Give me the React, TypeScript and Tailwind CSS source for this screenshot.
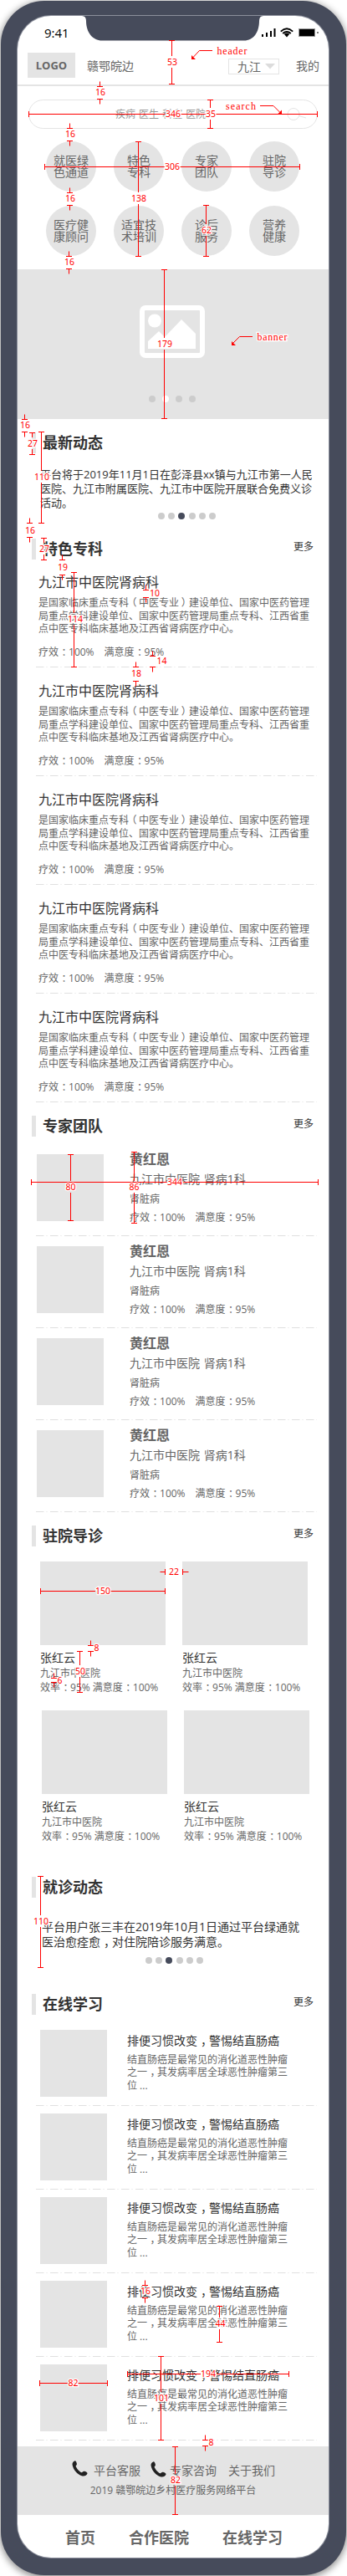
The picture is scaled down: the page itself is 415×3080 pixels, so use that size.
import type { ReactNode } from "react";

// Centres full-width punctuation inside its one-em cell.
function Zh({ children }: { children: string }) {
  return (
    <>
      {children.split(/([：，（）])/).map((part, i) => {
        if (part === "：" || part === "，")
          return <span key={i} className="inline-block w-[1em] indent-[0.28em]">{part}</span>;
        if (part === "（")
          return <span key={i} className="inline-block w-[1em] indent-[-0.22em]">{part}</span>;
        if (part === "）")
          return <span key={i} className="inline-block w-[1em] indent-[0.22em]">{part}</span>;
        return part;
      })}
    </>
  );
}

function Line({ children, className = "" }: { children: string; className?: string }) {
  return (
    <div className={"whitespace-pre " + className}>
      <Zh>{children}</Zh>
    </div>
  );
}

function Divider() {
  return (
    <svg className="mt-auto ml-[22px] block shrink-0" width="336" height="1">
      <line x1="0" y1="0.5" x2="336" y2="0.5" stroke="#e0e0e0" strokeDasharray="9.5 3 1 3.5" />
    </svg>
  );
}

function Title({ children, more = false, className = "" }: { children: string; more?: boolean; className?: string }) {
  return (
    <div className={"flex h-[25px] shrink-0 pl-[17px] pr-[18px] " + className}>
      <div className="h-[25px] w-[5px] bg-[#e4e4e4]" />
      <h2 className="ml-[8px] text-[18px] leading-[24px] font-bold text-[#333]">{children}</h2>
      {more && <span className="ml-auto text-[12px] leading-[20px] text-[#333]">更多</span>}
    </div>
  );
}

function Dots({ className = "" }: { className?: string }) {
  return (
    <div className={"flex h-[8px] gap-[4px] " + className}>
      {[0, 1, 2, 3, 4, 5].map((i) => (
        <span
          key={i}
          className={
            "h-[8px] w-[8px] rounded-full " + (i === 2 ? "mr-[1px] bg-[#464b5b]" : "bg-[#ccc]")
          }
        />
      ))}
    </div>
  );
}

function Circle({ lines }: { lines: string[] }) {
  return (
    <div className="flex h-[60px] w-[60px] flex-col items-center justify-center rounded-full bg-[#e4e4e4] text-[14px] leading-[14.5px] text-[#666]">
      {lines.map((l) => (
        <div key={l}>{l}</div>
      ))}
    </div>
  );
}

function Specialty() {
  return (
    <div className="flex h-[130px] flex-col pt-[18px]">
      <div className="pl-[25px]">
        <div className="text-[16px] leading-[20px] text-[#333]">九江市中医院肾病科</div>
        <div className="mt-[7px] text-[12px] leading-[15.5px] text-[#666]">
          <Line>是国家临床重点专科（中医专业）建设单位、国家中医药管理</Line>
          <Line>局重点学科建设单位、国家中医药管理局重点专科、江西省重</Line>
          <Line>点中医专科临床基地及江西省肾病医疗中心。</Line>
        </div>
        <Line className="mt-[12px] text-[12px] leading-[16px] text-[#666]">疗效：100%　满意度：95%</Line>
      </div>
      <Divider />
    </div>
  );
}

function Expert() {
  return (
    <div className="flex h-[110px] flex-col">
      <div className="flex pl-[23px]">
        <div className="mt-[12px] h-[80px] w-[80px] bg-[#e4e4e4]" />
        <div className="ml-[31px] pt-[8px] text-[#666]">
          <div className="text-[16px] leading-[20px] font-bold">黄红恩</div>
          <div className="mt-[4px] text-[14px] leading-[20px] [word-spacing:1px]">九江市中医院 肾病1科</div>
          <div className="mt-[6px] text-[12px] leading-[16px]">肾脏病</div>
          <Line className="mt-[6px] text-[12px] leading-[16px]">疗效：100%　满意度：95%</Line>
        </div>
      </div>
      <Divider />
    </div>
  );
}

function Guide() {
  return (
    <div className="w-[150px]">
      <div className="h-[100px] bg-[#e4e4e4]" />
      <div className="mt-[7px] text-[14px] leading-[16px] text-[#333]">张红云</div>
      <div className="mt-[3px] text-[12px] leading-[16px] text-[#666]">九江市中医院</div>
      <Line className="mt-[1px] text-[12px] leading-[16px] text-[#666]">效率：95% 满意度：100%</Line>
    </div>
  );
}

function Article() {
  return (
    <div className="flex h-[100px] flex-col">
      <div className="flex pl-[27px]">
        <div className="mt-[9px] h-[80px] w-[80px] bg-[#e4e4e4]" />
        <div className="ml-[24px] pt-[13px]">
          <Line className="text-[14px] leading-[18px] text-[#333]">排便习惯改变，警惕结直肠癌</Line>
          <div className="mt-[6px] text-[12px] leading-[15.4px] text-[#666]">
            <Line>结直肠癌是最常见的消化道恶性肿瘤</Line>
            <Line>之一，其发病率居全球恶性肿瘤第三</Line>
            <Line>位 ...</Line>
          </div>
        </div>
      </div>
      <Divider />
    </div>
  );
}

function Phone({ className = "" }: { className?: string }) {
  return (
    <svg className={"shrink-0 " + className} width="19" height="19" viewBox="0 0 19 19">
      <path
        d="M3.2 0.4C1.2 1.2 0.2 3 0.6 5.2C1.6 10.8 6.6 16.6 11.8 18.2C14 18.9 17.6 18.6 18.5 15.6C18.8 14.2 16.6 12.9 14.6 12.8C13.2 12.7 12.6 14 11.6 14.3C9.6 14.2 5 8.8 4.6 6.6C4.8 5.8 6 5.4 5.9 4C5.8 2.2 4.6 0 3.2 0.4Z"
        fill="#222"
      />
    </svg>
  );
}

type Measure = [number, number, number, string, number, number];

// [x, y1, y2, label, labelX, labelY]
const vertical: Measure[] = [
  [205.5, 48.5, 100.5, "53", 206, 74],
  [251.5, 119.5, 153.5, "35", 252, 136],
  [165.5, 169.5, 306.5, "138", 166, 237],
  [246.5, 245.5, 306.5, "62", 247, 275],
  [196.5, 322.5, 500.5, "179", 197, 411],
  [49.5, 516.5, 625.5, "110", 50, 570],
  [38.5, 517.5, 543.5, "27", 39, 530],
  [52.5, 643.5, 669.5, "27", 53, 656],
  [88.5, 684.5, 797.5, "114", 90, 740],
  [84.5, 1380.5, 1459.5, "80", 84.5, 1419],
  [160.5, 1377.5, 1462.5, "86", 160.5, 1419],
  [95.5, 1974.5, 2023.5, "50", 96, 1998],
  [48.5, 2243.5, 2352.5, "110", 49, 2297],
  [262.5, 2757.5, 2800.5, "44", 263.5, 2778],
  [192.5, 2817.5, 2917.5, "101", 193, 2867],
  [209.5, 2925.5, 3006.5, "82", 210, 2965],
];

// [y, x1, x2, label, labelX, labelY]
const horizontal: Measure[] = [
  [136.5, 34.5, 379.5, "346", 207, 136],
  [199.5, 53.5, 358.5, "306", 206, 199],
  [1413.5, 37.5, 380.5, "344", 209, 1413],
  [1902.5, 48.5, 197.5, "150", 123, 1902],
  [2849.5, 47.5, 128.5, "82", 87.5, 2849],
  [2838.5, 152.5, 345.5, "194", 249, 2838],
];

// [x, y1, y2, label, labelX, labelY]
const gaps: Measure[] = [
  [119.5, 103.5, 118.5, "16", 120, 110],
  [83.5, 153.5, 168.5, "16", 84, 160],
  [83.5, 230.5, 245.5, "16", 84, 237],
  [82.5, 306.5, 321.5, "16", 83, 313],
  [29.5, 501.5, 516.5, "16", 30, 508],
  [35.5, 625.5, 642.5, "16", 36, 634],
  [74.5, 669.5, 687.5, "19", 75, 678],
  [174.5, 705.5, 714.5, "10", 185, 709],
  [182.5, 784.5, 797.5, "14", 193.5, 790],
  [162.5, 797.5, 814.5, "18", 163, 805],
  [108.5, 1967.5, 1974.5, "8", 115.5, 1970],
  [64.5, 2006.5, 2011.5, "6", 71.5, 2008.5],
  [173.5, 2732.5, 2747.5, "16", 174, 2739],
  [245.5, 2917.5, 2924.5, "8", 252.5, 2920],
];

function Label({ x, y, children }: { x: number; y: number; children: ReactNode }) {
  return (
    <text
      x={x}
      y={y + 4}
      textAnchor="middle"
      fill="#f00"
      stroke="#fff"
      strokeWidth="2.5"
      paintOrder="stroke"
      className="font-['Noto_Sans'] text-[10.5px]"
    >
      {children}
    </text>
  );
}

function Callout({ x, y, width = 36, children }: { x: number; y: number; width?: number; children: string }) {
  return (
    <text
      x={x}
      y={y}
      textLength={width}
      lengthAdjust="spacing"
      fill="#f00"
      stroke="#fff"
      strokeWidth="2.5"
      paintOrder="stroke"
      className="font-['Liberation_Serif'] text-[12px]"
    >
      {children}
    </text>
  );
}

function Annotations() {
  return (
    <svg className="pointer-events-none absolute top-0 left-0" width="415" height="3080" fill="none" stroke="#f00">
      {vertical.map(([x, a, b, , , ly], i) => (
        <path
          key={"v" + i}
          d={`M${x - 3.5} ${a}h7M${x - 3.5} ${b}h7M${x} ${a}V${ly - 7}M${x} ${ly + 7}V${b}`}
        />
      ))}
      {horizontal.map(([y, a, b, t, lx], i) => (
        <path
          key={"h" + i}
          d={`M${a} ${y - 3.5}v7M${b} ${y - 3.5}v7M${a} ${y}H${lx - t.length * 3}M${lx + t.length * 3} ${y}H${b}`}
        />
      ))}
      {gaps.map(([x, a, b], i) => (
        <path key={"g" + i} d={`M${x - 3.5} ${a}h7M${x - 3.5} ${b}h7M${x} ${a}v-6M${x} ${b}v6`} />
      ))}
      <path d="M197.5 1876v7M218.5 1876v7M197.5 1879.5h-6M218.5 1879.5h7" />
      <g stroke="none">
        {[...vertical, ...horizontal, ...gaps].map(([, , , t, lx, ly], i) => (
          <Label key={i} x={lx} y={ly}>
            {t}
          </Label>
        ))}
        <Label x={208} y={1879}>22</Label>
      </g>
      <path d="M254 60.5H238.5L231 68.5M311 126.5H327L334.5 134M302 402.5H286.5L279 410" />
      <path d="M229 71v-5l5 5zM337 136.500v-5l-5 5zM277 413v-5l5 5z" fill="#f00" stroke="none" />
      <g>
        <Callout x={259.500} y={65}>header</Callout>
        <Callout x={270} y={131}>search</Callout>
        <Callout x={307.500} y={407}>banner</Callout>
      </g>
    </svg>
  );
}

export default function App() {
  return (
    <div className="relative h-[3080px] w-[415px] overflow-hidden bg-white pt-[1px] pl-[1px] font-['Open_Sans','Noto_Sans_CJK_SC',sans-serif]">
      <div className="h-[3078px] w-[413px] rounded-[52px] bg-[#464b5b] pt-[18px] pl-[20px] shadow-[0_2px_8px_1px_rgba(0,0,0,0.45)]">
        <div className="flex h-[3039px] w-[372px] flex-col overflow-hidden rounded-[40px] bg-white ring-1 ring-[#8b8f9b]">
          <div className="relative flex h-[29px] shrink-0 pl-[32px]">
            <svg className="absolute top-0 left-0" width="372" height="30">
              <path d="M74 -1V0H77Q82 0 82 6C82 20 90 29.500 101 29.500H271C282 29.500 289 20 289 6Q289 0 294 0H298V-1Z" fill="#464b5b" />
              <g fill="#000">
                <rect x="292" y="22" width="2" height="3" />
                <rect x="297" y="20" width="2" height="5" />
                <rect x="302" y="18" width="2" height="7" />
                <rect x="306.500" y="15" width="2" height="10" />
                <path d="M322 25.500L318.800 21.800Q322 19.300 325.200 21.800Z" />
                <rect x="337" y="16" width="18" height="8" />
                <rect x="358.500" y="19" width="1" height="2" />
              </g>
              <rect x="336.500" y="15.500" width="19" height="9" fill="none" stroke="#999" />
              <path d="M314.800 18.600Q322 12 329.200 18.600M317.200 21Q322 17 326.800 21" fill="none" stroke="#000" strokeWidth="1.900" />
            </svg>
            <div className="mt-[10px] text-[15px] leading-[20px] text-black">9:41</div>
          </div>

          <header className="flex h-[55px] shrink-0 border-b-2 border-[#e4e4e4] pl-[12px] text-[14px] text-[#666]">
            <div className="mt-[15px] h-[30px] w-[57px] bg-[#e4e4e4] text-center text-[13px] leading-[31px] font-bold">LOGO</div>
            <div className="mt-[21px] ml-[14px] leading-[20px]">赣鄂皖边</div>
            <div className="mt-[22px] ml-[113px] flex h-[19px] w-[61px] border border-[#e4e4e4] pl-[10px] leading-[17px]">
              九江
              <svg className="mt-[5px] ml-[5px]" width="12" height="7">
                <path d="M0 0H12L6 6.500Z" fill="#dcdcdc" />
              </svg>
            </div>
            <div className="mt-[21px] ml-[20px] leading-[20px]">我的</div>
          </header>

          <div className="mt-[16px] ml-[13px] flex h-[35px] w-[346px] shrink-0 rounded-full border border-[#e4e4e4] pl-[103px] text-[12px] leading-[34px] text-[#999]">
            <span className="w-[205px] [word-spacing:1px]">疾病 医生 科室 医院</span>
            <svg className="mt-[8px]" width="24" height="18" fill="none" stroke="#e4e4e4">
              <circle cx="8" cy="8.500" r="7" />
              <path d="M14.500 10.500L23 13" />
            </svg>
          </div>

          <div className="mt-[15px] grid shrink-0 grid-cols-[repeat(4,60px)] gap-x-[21px] gap-y-[17px] pl-[34px]">
            <Circle lines={["就医绿", "色通道"]} />
            <Circle lines={["特色", "专科"]} />
            <Circle lines={["专家", "团队"]} />
            <Circle lines={["驻院", "导诊"]} />
            <Circle lines={["医疗健", "康顾问"]} />
            <Circle lines={["适宜技", "术培训"]} />
            <Circle lines={["诊后", "服务"]} />
            <Circle lines={["营养", "健康"]} />
          </div>

          <div className="mt-[16px] flex h-[179px] shrink-0 flex-col items-center bg-[#e4e4e4] pt-[43px]">
            <svg className="mr-[2px]" width="78" height="63">
              <rect x="3" y="3" width="72" height="57" rx="4" fill="none" stroke="#fff" strokeWidth="6" />
              <circle cx="18" cy="18.500" r="8" fill="#fff" />
              <path d="M10 52V43L23 31L30 38L50 17L67 34V52Z" fill="#fff" />
            </svg>
            <div className="mt-[45px] mr-[2px] flex gap-[8px]">
              <span className="h-[8px] w-[8px] rounded-full bg-[#ccc]" />
              <span className="h-[8px] w-[8px] rounded-full bg-white" />
              <span className="h-[8px] w-[8px] rounded-full bg-[#ccc]" />
              <span className="h-[8px] w-[8px] rounded-full bg-[#ccc]" />
            </div>
          </div>

          <Title className="mt-[16px]">最新动态</Title>
          <div className="mt-[17px] pl-[27px] text-[13px] leading-[17px] text-[#333]">
            <Line>平台将于2019年11月1日在彭泽县xx镇与九江市第一人民</Line>
            <Line>医院、九江市附属医院、九江市中医院开展联合免费义诊</Line>
            <Line>活动。</Line>
          </div>
          <Dots className="mt-[3px] ml-[168px]" />

          <Title more className="mt-[23px]">特色专科</Title>
          <div className="-mt-px">
            <Specialty />
            <Specialty />
            <Specialty />
            <Specialty />
            <Specialty />
          </div>

          <Title more className="mt-[16px]">专家团队</Title>
          <div className="mt-[9px]">
            <Expert />
            <Expert />
            <Expert />
            <Expert />
          </div>

          <Title more className="mt-[16px]">驻院导诊</Title>
          <div className="mt-[18px] flex gap-[20px] pl-[27px]">
            <Guide />
            <Guide />
          </div>
          <div className="mt-[19px] flex gap-[20px] pl-[29px]">
            <Guide />
            <Guide />
          </div>

          <Title className="mt-[40px]">就诊动态</Title>
          <div className="mt-[26px] pl-[29px] text-[14px] leading-[18px] text-[#333]">
            <Line>平台用户张三丰在2019年10月1日通过平台绿通就</Line>
            <Line>医治愈痊愈，对住院陪诊服务满意。</Line>
          </div>
          <Dots className="mt-[9px] ml-[153px]" />

          <Title more className="mt-[36px]">在线学习</Title>
          <div className="mt-[9px]">
            <Article />
            <Article />
            <Article />
            <Article />
            <Article />
          </div>

          <footer className="mt-[7px] h-[82px] shrink-0 bg-[#e4e4e4] pt-[17px] text-[#666]">
            <div className="flex pl-[65px] text-[14px] leading-[24px]">
              <Phone />
              <span className="ml-[7px]">平台客服</span>
              <Phone className="mt-[1px] ml-[12px]" />
              <span className="ml-[4px]">专家咨询</span>
              <span className="ml-[14px]">关于我们</span>
            </div>
            <div className="mt-[3px] text-center text-[12px] leading-[17px]">2019 赣鄂皖边乡村医疗服务网络平台</div>
          </footer>

          <nav className="flex pt-[15px] pl-[57px] text-[18px] leading-[24px] font-bold text-[#666]">
            <span>首页</span>
            <span className="ml-[40px]">合作医院</span>
            <span className="ml-[40px]">在线学习</span>
          </nav>
        </div>
      </div>
      <Annotations />
    </div>
  );
}
